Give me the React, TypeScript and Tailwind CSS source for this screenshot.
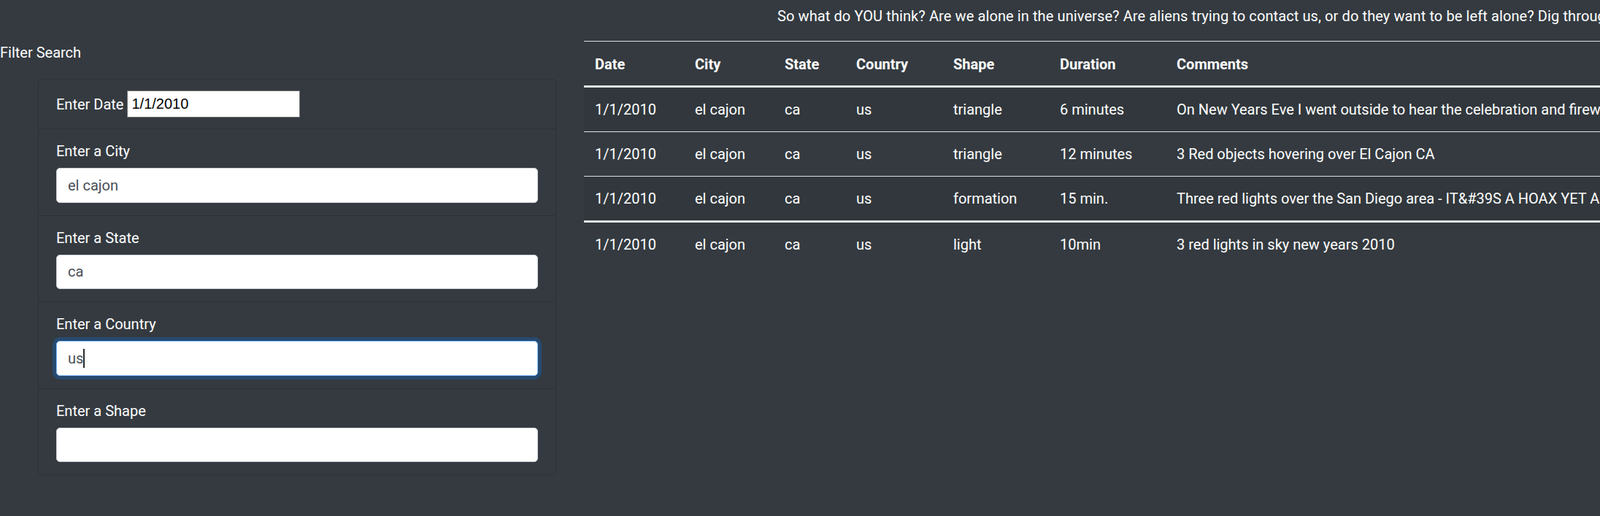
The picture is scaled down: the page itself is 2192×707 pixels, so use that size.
import React from "react";

interface Sighting {
  date: string;
  city: string;
  state: string;
  country: string;
  shape: string;
  duration: string;
  comments: string;
}

const sightings: Sighting[] = [
  {
    date: "1/1/2010",
    city: "el cajon",
    state: "ca",
    country: "us",
    shape: "triangle",
    duration: "6 minutes",
    comments:
      "On New Years Eve I went outside to hear the celebration and fireworks. I noticed a bright triangle moving slowly across the sky.",
  },
  {
    date: "1/1/2010",
    city: "el cajon",
    state: "ca",
    country: "us",
    shape: "triangle",
    duration: "12 minutes",
    comments: "3 Red objects hovering over El Cajon CA",
  },
  {
    date: "1/1/2010",
    city: "el cajon",
    state: "ca",
    country: "us",
    shape: "formation",
    duration: "15 min.",
    comments:
      "Three red lights over the San Diego area - IT&#39S A HOAX YET AGAIN, but still fun to watch",
  },
];

const lastRow: Sighting = {
  date: "1/1/2010",
  city: "el cajon",
  state: "ca",
  country: "us",
  shape: "light",
  duration: "10min",
  comments: "3 red lights in sky new years 2010",
};

const colWidths = ["w-[137px]", "w-[123px]", "w-[98px]", "w-[133px]", "w-[146px]", "w-[160px]", "w-[1200px]"];

function Row({ s, border, striped }: { s: Sighting; border: string; striped: boolean }) {
  const cells = [s.date, s.city, s.state, s.country, s.shape, s.duration, s.comments];
  return (
    <tr className={`${border} ${striped ? "bg-[rgba(0,0,0,0.05)]" : ""}`}>
      {cells.map((c, i) => (
        <td key={i} className="px-[15px] py-[15px] leading-[30px] align-top overflow-hidden">
          {c}
        </td>
      ))}
    </tr>
  );
}

function FilterItem({
  label,
  value,
  focused,
  last,
}: {
  label: string;
  value: string;
  focused?: boolean;
  last?: boolean;
}) {
  return (
    <li className={`px-[24px] pt-[15px] pb-[17px] ${last ? "" : "border-b border-[rgba(0,0,0,0.125)]"}`}>
      <label className="block leading-[30px] mb-[8px]">{label}</label>
      <div className="relative">
        <input
          readOnly
          value={value}
          className={`block w-full h-[47.5px] px-[15px] bg-white text-[#495057] text-[20px] rounded-[5px] border outline-none ${
            focused
              ? "border-[#80bdff] shadow-[0_0_0_5px_rgba(0,123,255,0.25)]"
              : "border-[#ced4da]"
          }`}
        />
        {focused && (
          <div className="pointer-events-none absolute inset-0 px-[16px] flex items-center text-[20px]">
            <span className="invisible">{value}</span>
            <span className="w-[2px] h-[26px] bg-[#2b2b2b]" />
          </div>
        )}
      </div>
    </li>
  );
}

export default function App() {
  return (
    <div className="min-h-screen w-[2192px] h-[707px] overflow-hidden bg-[#343a40] text-white text-[20px] font-['Roboto',sans-serif]">
      <div className="h-[56px] pt-[7px] pl-[1065px] whitespace-nowrap leading-[30px] tracking-[0.1px]">
        So what do YOU think? Are we alone in the universe? Are aliens trying to contact us, or do they
        want to be left alone? Dig through the data below to find out more about each sighting.
      </div>
      <div className="flex">
        <div className="w-[800px] shrink-0">
          <div className="leading-[30px] pt-[1px]">Filter Search</div>
          <ul className="ml-[52px] mt-[21px] w-[710px] border border-[rgba(0,0,0,0.125)] rounded-[5px]">
            <li className="px-[24px] py-[15px] border-b border-[rgba(0,0,0,0.125)] flex items-center">
              <label className="leading-[30px]">Enter Date</label>
              <input
                readOnly
                value="1/1/2010"
                className="ml-[5px] w-[237px] h-[37px] px-[5px] bg-white text-black text-[20px] font-['Liberation_Sans',sans-serif] border border-[#767676] outline-none"
              />
            </li>
            <FilterItem label="Enter a City" value="el cajon" />
            <FilterItem label="Enter a State" value="ca" />
            <FilterItem label="Enter a Country" value="us" focused />
            <FilterItem label="Enter a Shape" value="" last />
          </ul>
        </div>
        <div className="flex-1 min-w-0 whitespace-nowrap">
          <table className="table-fixed border-collapse text-left w-[1997px]">
            <thead>
              <tr className="border-t border-b-[3px] border-[#dee2e6]">
                {["Date", "City", "State", "Country", "Shape", "Duration", "Comments"].map((h, i) => (
                  <th key={h} className={`${colWidths[i]} px-[15px] pt-[16px] pb-[14px] leading-[30px] font-bold`}>
                    {h}
                  </th>
                ))}
              </tr>
            </thead>
            <tbody>
              {sightings.map((s, i) => (
                <Row key={i} s={s} striped={i % 2 === 0} border={i === 0 ? "" : "border-t border-[#dee2e6]"} />
              ))}
            </tbody>
            <tbody>
              <Row s={lastRow} striped={false} border="border-t-[3px] border-[#dee2e6]" />
            </tbody>
          </table>
        </div>
      </div>
    </div>
  );
}
